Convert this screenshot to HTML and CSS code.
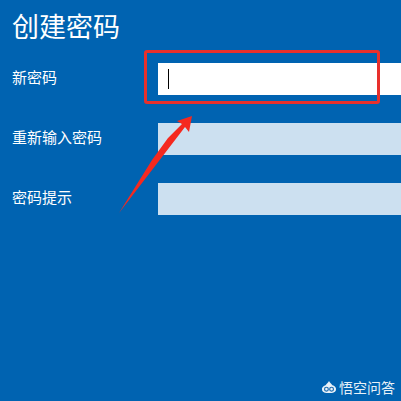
FILE: index.html
```html
<!DOCTYPE html>
<html lang="zh-CN">
<head>
  <meta charset="UTF-8">
  <meta name="viewport" content="width=device-width, initial-scale=1.0">
  <title>创建密码</title>
  <link rel="stylesheet" href="styles.css">
</head>
<body>
  <div class="page">
    <h1>创建密码</h1>
    <div class="form">
      <label>新密码</label>
      <div class="field active"><span class="caret"></span></div>
      <label>重新输入密码</label>
      <div class="field"></div>
      <label>密码提示</label>
      <div class="field"></div>
    </div>

    <!-- red annotation drawn over the form -->
    <div class="mark-box"></div>
    <svg class="mark-arrow" width="401" height="401" viewBox="0 0 401 401">
      <path d="M119 213 L152 160 L168 138 L182 124 L177 121 L192 116 L189 132 L185 127 L119 213 Z" fill="#f5291f"/>
    </svg>

    <div class="watermark">
      <svg width="16" height="12" viewBox="0 0 18 14">
        <path d="M9 0 C10 2 12 3 13 5 C16 6 18 8 17 11 C16 13 14 14 9 14 C4 14 2 13 1 11 C0 8 2 6 5 5 C6 3 8 2 9 0 Z" fill="#e8f1f8"/>
        <circle cx="6" cy="9.5" r="2.2" fill="none" stroke="#1d6cb0" stroke-width="1.4"/>
        <circle cx="12" cy="9.5" r="2.2" fill="none" stroke="#1d6cb0" stroke-width="1.4"/>
      </svg>
      <span>悟空问答</span>
    </div>
  </div>
</body>
</html>
```

FILE: styles.css
```css
html, body {
  margin: 0;
  padding: 0;
}
body {
  font-family: "Noto Sans CJK SC", "Liberation Sans", sans-serif;
  background: #0063b1;
  color: white;
}
.page {
  position: relative;
  width: 401px;
  height: 401px;
  overflow: hidden;
  padding: 8px 0 0 12px;
  box-sizing: border-box;
}
h1 {
  margin: 0;
  font-size: 27px;
  font-weight: 400;
  line-height: 36px;
}
.form {
  display: grid;
  grid-template-columns: 146px 243px;
  grid-auto-rows: 32px;
  row-gap: 28px;
  margin-top: 19px;
  align-items: center;
}
label {
  font-size: 15px;
  line-height: 20px;
  padding-bottom: 4px;
}
.field {
  height: 32px;
  background: #cce0f0;
  display: flex;
  align-items: center;
  padding-left: 10px;
  box-sizing: border-box;
}
.field.active {
  background: white;
}
.caret {
  width: 1px;
  height: 20px;
  background: black;
}
.mark-box {
  position: absolute;
  left: 144px;
  top: 50px;
  width: 236px;
  height: 54px;
  box-sizing: border-box;
  border: 3px solid #e8302c;
  border-radius: 3px;
}
.mark-arrow {
  position: absolute;
  left: 0;
  top: 0;
}
.watermark {
  position: absolute;
  right: 6px;
  bottom: 6px;
  display: flex;
  align-items: center;
  gap: 2px;
  color: #e8f1f8;
  font-size: 14px;
  line-height: 16px;
}
```
